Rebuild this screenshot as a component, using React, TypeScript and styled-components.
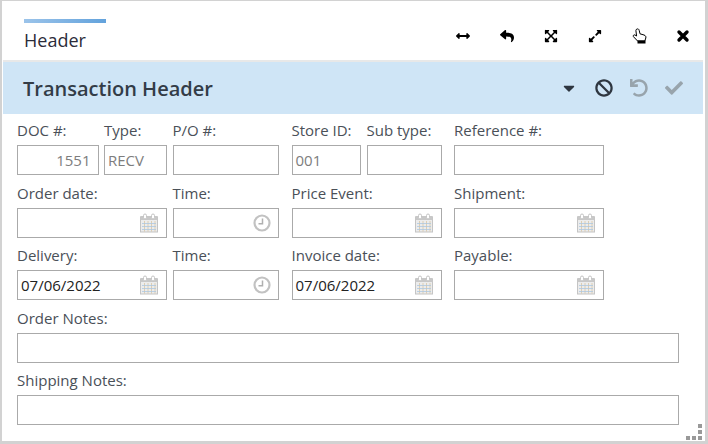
import { ReactNode } from 'react';
import styled, { createGlobalStyle } from 'styled-components';
import {
  FaArrowsAltH,
  FaBan,
  FaCaretDown,
  FaCheck,
  FaExpandAlt,
  FaExpandArrowsAlt,
  FaReply,
  FaUndo,
} from 'react-icons/fa';

const GlobalStyle = createGlobalStyle`
  html, body { margin: 0; padding: 0; background: #fff; }
  * { box-sizing: border-box; }
  body { font-family: "Open Sans", "Liberation Sans", sans-serif; }
`;

const Window = styled.div`
  position: relative;
  width: 708px;
  height: 444px;
  overflow: hidden;
  background: #fff;
  border: solid #d2d2d2;
  border-width: 1px 3px 3px 2px;
`;

const TitleBar = styled.div`
  height: 61px;
  display: flex;
  justify-content: space-between;
  padding-left: 21px;
  border-bottom: 2px solid #e8e8e8;
  margin: 0 2px 0 1px;
`;

const TabTitle = styled.div`
  width: 82px;
  margin-top: 18px;
  padding-top: 5px;
  border-top: 4px solid;
  border-image: linear-gradient(to right, #9cc4ea, #62a2dc) 1;
  color: #2c2c3a;
  font-size: 18px;
  line-height: 25px;
`;

const TitleTools = styled.div`
  display: flex;
  align-items: center;
  padding-top: 10px;
  margin-right: -2px;
`;

const ToolButton = styled.span`
  width: 44px;
  display: flex;
  justify-content: center;
  color: #000;
  font-size: 14px;
`;

const SectionBar = styled.div`
  height: 52px;
  margin: 0 2px 0 1px;
  padding-left: 20px;
  display: flex;
  align-items: center;
  justify-content: space-between;
  background: #cfe5f6;
`;

const SectionTitle = styled.h2`
  margin: 0;
  color: #333c47;
  font-size: 20px;
  font-weight: 600;
`;

const SectionTools = styled.div`
  display: flex;
  align-items: center;
  gap: 15px;
  padding-right: 19px;
`;

const SectionIcon = styled.span<{ $muted?: boolean }>`
  display: flex;
  width: 20px;
  justify-content: center;
  color: ${({ $muted }) => ($muted ? '#98a4ac' : '#2e3640')};
  font-size: 18px;
`;

const Form = styled.div`
  padding: 5px 0 0 15px;
  display: flex;
  flex-direction: column;
  gap: 6.5px;
`;

const Row = styled.div`
  display: flex;
  gap: 12.5px;
`;

const Cluster = styled.div`
  display: flex;
  gap: 5.5px;
`;

const Field = styled.div<{ $width: number }>`
  width: ${({ $width }) => $width}px;
  display: flex;
  flex-direction: column;
`;

const Label = styled.label`
  height: 26px;
  color: #4a5058;
  font-size: 15px;
  line-height: 22px;
  white-space: nowrap;
`;

const Box = styled.div<{ $align?: string; $muted?: boolean }>`
  height: 30px;
  padding: 0 7px 0 3px;
  display: flex;
  align-items: center;
  justify-content: ${({ $align }) => ($align === 'right' ? 'flex-end' : 'space-between')};
  background: #fff;
  border: 1px solid #aaa;
  color: ${({ $muted }) => ($muted ? '#7d7d7d' : '#222')};
  font-size: 15px;
`;

const PickerIcon = styled.svg`
  flex: none;
  margin-left: auto;
`;

const Grip = styled.div`
  position: absolute;
  right: 3px;
  bottom: 1px;
  display: grid;
  grid-template-columns: repeat(3, 4px);
  grid-auto-rows: 4px;
  gap: 2px;
`;

const GripDot = styled.i<{ $on?: boolean }>`
  background: ${({ $on }) => ($on ? '#999' : 'transparent')};
`;

const CalendarIcon = () => (
  <PickerIcon width="20" height="20" viewBox="0 0 20 20">
    <rect x="1.5" y="4" width="17" height="15" fill="#ececec" stroke="#c4c4c4" />
    <rect x="1.5" y="3" width="17" height="4" fill="#c8c8c8" />
    <rect x="4.5" y="1" width="3" height="5" rx="1.5" fill="#fff" stroke="#c4c4c4" />
    <rect x="12.5" y="1" width="3" height="5" rx="1.5" fill="#fff" stroke="#c4c4c4" />
    <path d="M5.5 8V18.5M9 8V18.5M12.5 8V18.5M16 8V18.5" stroke="#d8c4a0" strokeOpacity="0.75" fill="none" />
    <path d="M3 10.5H17M3 13.5H17M3 16.5H17" stroke="#a9c6e0" strokeOpacity="0.75" fill="none" />
  </PickerIcon>
);

const ClockIcon = () => (
  <PickerIcon width="18" height="18" viewBox="0 0 18 18">
    <circle cx="9" cy="9" r="7.5" fill="#fff" stroke="#c2c2c2" strokeWidth="2.2" />
    <path d="M9.5 4.5V9.8H5.5" fill="none" stroke="#b0b0b0" strokeWidth="1.5" />
  </PickerIcon>
);

const CloseIcon = () => (
  <svg width="14" height="14" viewBox="0 0 14 14">
    <path d="M3 3L11 11M11 3L3 11" stroke="#000" strokeWidth="3.4" strokeLinecap="round" />
  </svg>
);

const HandIcon = () => (
  <svg width="15" height="16" viewBox="0 0 15 16">
    <path
      d="M5 1C6 .6 7 1.2 7.2 2.4L8 5.8L12 7C13.6 7.5 14.2 8.6 13.8 10L12.8 13H5.6L1.4 8.6C.8 7.6 1.9 6.4 3 7L4.6 8L3.9 2.6C3.8 1.9 4.3 1.2 5 1Z"
      fill="#fff"
      stroke="#000"
    />
    <rect x="5.5" y="12.5" width="8" height="3" fill="#000" />
  </svg>
);

type InputProps = { label: string; width: number; children?: ReactNode; align?: string; muted?: boolean };

const Input = ({ label, width, children, align, muted }: InputProps) => (
  <Field $width={width}>
    <Label>{label}</Label>
    <Box $align={align} $muted={muted}>
      {children}
    </Box>
  </Field>
);

export default function App() {
  return (
    <>
      <GlobalStyle />
      <Window>
        <TitleBar>
          <TabTitle>Header</TabTitle>
          <TitleTools>
            <ToolButton><FaArrowsAltH /></ToolButton>
            <ToolButton><FaReply /></ToolButton>
            <ToolButton><FaExpandArrowsAlt /></ToolButton>
            <ToolButton><FaExpandAlt /></ToolButton>
            <ToolButton><HandIcon /></ToolButton>
            <ToolButton><CloseIcon /></ToolButton>
          </TitleTools>
        </TitleBar>
        <SectionBar>
          <SectionTitle>Transaction Header</SectionTitle>
          <SectionTools>
            <SectionIcon><FaCaretDown /></SectionIcon>
            <SectionIcon><FaBan /></SectionIcon>
            <SectionIcon $muted><FaUndo /></SectionIcon>
            <SectionIcon $muted><FaCheck /></SectionIcon>
          </SectionTools>
        </SectionBar>
        <Form>
          <Row>
            <Cluster>
              <Input label="DOC #:" width={81.5} align="right" muted>1551</Input>
              <Input label="Type:" width={63} muted>RECV</Input>
              <Input label="P/O #:" width={106.5} />
            </Cluster>
            <Cluster>
              <Input label="Store ID:" width={69.5} muted>001</Input>
              <Input label="Sub type:" width={75} />
            </Cluster>
            <Input label="Reference #:" width={150} />
          </Row>
          <Row>
            <Cluster>
              <Input label="Order date:" width={150}><CalendarIcon /></Input>
              <Input label="Time:" width={106.5}><ClockIcon /></Input>
            </Cluster>
            <Input label="Price Event:" width={150}><CalendarIcon /></Input>
            <Input label="Shipment:" width={150}><CalendarIcon /></Input>
          </Row>
          <Row>
            <Cluster>
              <Input label="Delivery:" width={150}>07/06/2022<CalendarIcon /></Input>
              <Input label="Time:" width={106.5}><ClockIcon /></Input>
            </Cluster>
            <Input label="Invoice date:" width={150}>07/06/2022<CalendarIcon /></Input>
            <Input label="Payable:" width={150}><CalendarIcon /></Input>
          </Row>
          <Input label="Order Notes:" width={662} />
          <Input label="Shipping Notes:" width={662} />
        </Form>
        <Grip>
          <GripDot /><GripDot /><GripDot $on />
          <GripDot /><GripDot /><GripDot $on />
          <GripDot $on /><GripDot $on /><GripDot $on />
        </Grip>
      </Window>
    </>
  );
}
